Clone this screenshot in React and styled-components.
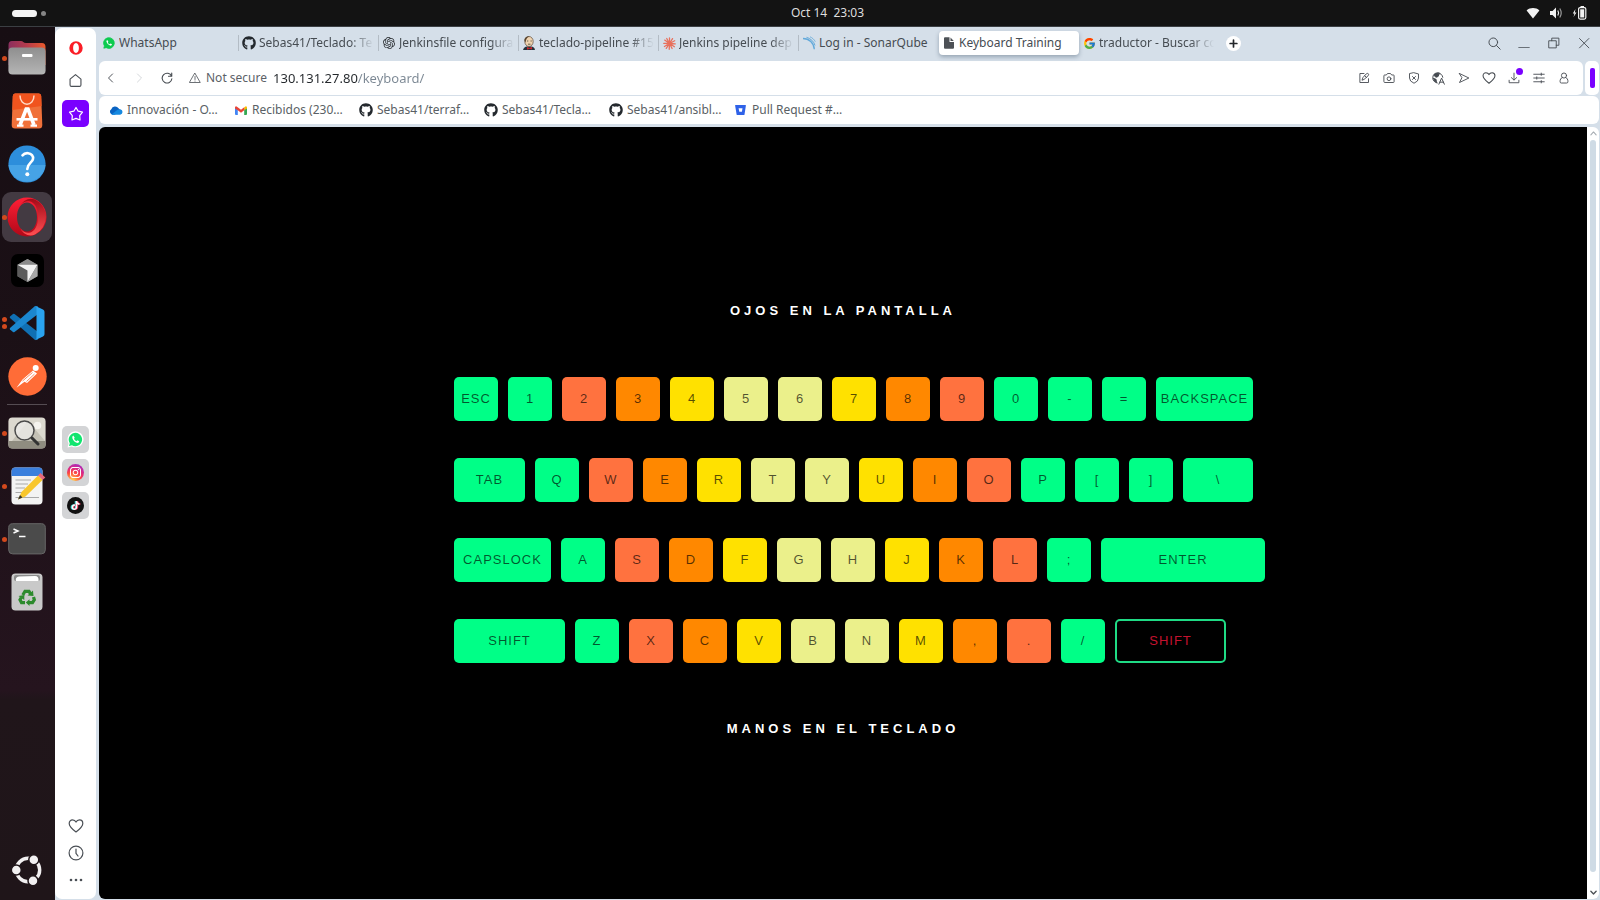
import React from "react";
import styled, { createGlobalStyle, css } from "styled-components";
import { SiOpenai, SiInstagram, SiTiktok } from "react-icons/si";
import { FaGithub } from "react-icons/fa";
import { FcGoogle } from "react-icons/fc";

const UI_FONT = '"Noto Sans", "Open Sans", sans-serif';
const CHROME = "#d5dfe9";
const PURPLE = "#7a00ff";

const GlobalStyle = createGlobalStyle`
  *, *::before, *::after { box-sizing: border-box; }
  body { margin: 0; background: #131313; font-family: ${UI_FONT}; }
  button { border: 0; margin: 0; padding: 0; background: none; font: inherit; color: inherit; cursor: pointer; }
  a { color: inherit; text-decoration: none; }
  h1, h2, ul { margin: 0; padding: 0; list-style: none; }
  svg { display: block; flex: none; }
`;

/* ---------- desktop shell ---------- */

const Desktop = styled.div`
  display: grid;
  grid-template: 27px 1fr / 55px 1fr;
  min-height: 100vh;
`;

const TopBar = styled.header`
  grid-column: 1 / -1;
  display: grid;
  grid-template-columns: 55px 1fr auto 1fr;
  align-items: center;
  background: #131313;
  border-bottom: 1px solid #3b3f43;
  color: #dedede;
  font-size: 12px;
  line-height: 16px;
`;

const Workspaces = styled.button`
  display: flex;
  align-items: center;
  gap: 4px;
  padding-left: 12px;
  height: 26px;
`;

const WorkspaceDot = styled.span`
  width: ${(p) => (p.$active ? 25 : 5)}px;
  height: ${(p) => (p.$active ? 7 : 5)}px;
  border-radius: 4px;
  background: ${(p) => (p.$active ? "#f4f4f4" : "#858585")};
`;

const Clock = styled.time`
  grid-column: 3;
  white-space: pre;
`;

const SystemTray = styled.div`
  display: flex;
  justify-content: flex-end;
  align-items: center;
  gap: 9px;
  padding-right: 13px;
`;

const Dock = styled.nav`
  display: flex;
  flex-direction: column;
  align-items: center;
  gap: 3px;
  padding: 6px 1px 5px 0;
  background: linear-gradient(#170e13 0%, #1b1016 35%, #25141e 76%, #20151a 77%, #1f1519 100%);
`;

const DockItem = styled.button`
  position: relative;
  display: grid;
  place-items: center;
  width: 50px;
  height: 50px;
  border-radius: 9px;
  background: ${(p) => (p.$active ? "#433a42" : "transparent")};
`;

const RunningDots = styled.span`
  position: absolute;
  left: 0;
  top: 0;
  bottom: 0;
  display: flex;
  flex-direction: column;
  justify-content: center;
  gap: 2px;
`;

const RunningDot = styled.i`
  width: 5px;
  height: 5px;
  border-radius: 50%;
  background: #d2491d;
`;

const DockRule = styled.hr`
  width: 40px;
  height: 1px;
  margin: 0;
  border: 0;
  background: #554c52;
`;

const DockSpacer = styled.div`
  flex: 1;
`;

/* ---------- browser ---------- */

const Browser = styled.div`
  display: grid;
  grid-template-columns: 41px 1fr;
  gap: 3px;
  min-width: 0;
  background: ${CHROME};
`;

const Sidebar = styled.aside`
  display: grid;
  grid-template-rows: 1fr auto 1fr;
  justify-items: center;
  margin: 1px 0 1px 0;
  padding: 6px 0;
  border-radius: 7px;
  background: #fff;
  color: #4a4f55;
`;

const SideGroup = styled.div`
  display: flex;
  flex-direction: column;
  gap: ${(p) => (p.$tight ? 0 : 6)}px;
  align-self: ${(p) => p.$align || "start"};
  margin-top: ${(p) => (p.$align === "center" ? 18 : 0)}px;
`;

const SideButton = styled.button`
  display: grid;
  place-items: center;
  width: 27px;
  height: 27px;
  border-radius: 5px;
  ${(p) => p.$tone === "active" && css`background: ${PURPLE}; color: #fff;`}
  ${(p) => p.$tone === "muted" && css`background: #d3d4d6;`}
`;

const Window = styled.div`
  display: flex;
  flex-direction: column;
  min-width: 0;
`;

const TabStrip = styled.div`
  display: flex;
  align-items: center;
  height: 34px;
  padding: 0 1px 2px 0;
  font-size: 12px;
  line-height: 16px;
  color: #464c52;
`;

const Tab = styled.button`
  position: relative;
  display: flex;
  align-items: center;
  gap: 3px;
  flex: 0 1 140px;
  min-width: 0;
  height: 24px;
  padding: 0 5px 0 3px;
  border-radius: 4px;
  text-align: left;
  ${(p) => p.$active && css`
    background: #fff;
    box-shadow: 0 2px 4px rgba(70, 90, 110, 0.45);
  `}
`;

const TabDivider = styled.i`
  position: absolute;
  left: -1px;
  top: 4px;
  bottom: 4px;
  width: 1px;
  background: #b3bcc5;
`;

const TabIcon = styled.span`
  display: grid;
  place-items: center;
  flex: none;
  width: 14px;
  height: 14px;
  color: ${(p) => p.$color || "inherit"};
`;

const TabTitle = styled.span`
  flex: 1;
  overflow: hidden;
  white-space: nowrap;
  mask-image: ${(p) => (p.$fade ? "linear-gradient(to right, #000 calc(100% - 24px), transparent)" : "none")};
`;

const NewTab = styled.button`
  display: grid;
  place-items: center;
  width: 15px;
  height: 15px;
  margin-left: 7px;
  border-radius: 50%;
  background: #fff;
  color: #22262a;
`;

const WindowControls = styled.div`
  display: flex;
  margin-left: auto;
`;

const WindowButton = styled.button`
  display: grid;
  place-items: center;
  width: 30px;
  height: 30px;
`;

const AddressRow = styled.div`
  display: flex;
  gap: 2px;
  height: 34px;
  padding-right: 1px;
`;

const AddressBar = styled.div`
  display: flex;
  align-items: center;
  flex: 1;
  min-width: 0;
  padding-right: 7px;
  border-radius: 6px;
  background: #fff;
  color: #454a50;
`;

const NavButton = styled.button`
  display: grid;
  place-items: center;
  width: 28px;
  height: 28px;
  color: ${(p) => (p.disabled ? "#c5c9cd" : "inherit")};
`;

const NavGroup = styled.div`
  display: flex;
  margin: 0 8px 0 -2px;
`;

const Security = styled.button`
  display: flex;
  align-items: center;
  gap: 5px;
  margin-right: 6px;
  font-size: 12px;
  line-height: 16px;
  color: #5c6167;
  white-space: nowrap;
`;

const UrlInput = styled.input`
  flex: 1;
  min-width: 0;
  padding: 0;
  border: 0;
  outline: 0;
  font: 13px/20px ${UI_FONT};
  color: #24282c;
  background: linear-gradient(to right, #24282c 85px, #7b8793 85px);
  background-clip: text;
  -webkit-text-fill-color: transparent;
`;

const ToolButton = styled.button`
  position: relative;
  display: grid;
  place-items: center;
  width: 25px;
  height: 28px;
`;

const Badge = styled.i`
  position: absolute;
  right: 3px;
  top: 4px;
  width: 7px;
  height: 7px;
  border-radius: 50%;
  background: ${PURPLE};
`;

const PanelHandle = styled.button`
  display: grid;
  place-items: center;
  width: 14px;
  border-radius: 5px;
  background: #fff;
`;

const HandleMark = styled.i`
  width: 5px;
  height: 20px;
  border-radius: 2px;
  background: ${PURPLE};
`;

const Bookmarks = styled.nav`
  display: flex;
  align-items: center;
  height: 28px;
  margin: 1px 1px 3px 0;
  padding-left: 9px;
  border-radius: 6px;
  background: #fff;
  color: #5a5f65;
  font-size: 12px;
  line-height: 16px;
`;

const Bookmark = styled.a`
  display: flex;
  align-items: center;
  gap: 4px;
  width: 125px;
  white-space: nowrap;
`;

const BookmarkIcon = styled.span`
  display: grid;
  place-items: center;
  width: 15px;
  height: 15px;
  color: #24292e;
`;

/* ---------- page ---------- */

const Viewport = styled.div`
  display: flex;
  flex: 1;
  margin: 0 1px 1px 0;
  border-radius: 6px;
  overflow: hidden;
`;

const Page = styled.main`
  display: flex;
  flex: 1;
  flex-direction: column;
  align-items: center;
  justify-content: center;
  gap: 56px;
  padding-top: 14px;
  background: #000;
  font-family: "Liberation Sans", Arial, sans-serif;
`;

const Banner = styled.h1`
  font-size: 13px;
  line-height: 20px;
  font-weight: 700;
  letter-spacing: 4px;
  text-transform: uppercase;
  color: #fff;
`;

const Keyboard = styled.ul`
  display: flex;
  flex-direction: column;
  justify-content: space-between;
  width: 778px;
  min-height: 286px;
`;

const KeyRow = styled.li`
  display: flex;
  gap: 10px;
`;

const FINGER = {
  pinky: "#00ff87",
  ring: "#ff723f",
  middle: "#ff8800",
  index: "#ffe100",
  thumb: "#ebf08b",
};

const Key = styled.button`
  flex: none;
  width: ${(p) => p.$width || 44}px;
  height: 44px;
  border-radius: 5px;
  background: ${(p) => FINGER[p.$finger]};
  color: rgba(0, 0, 0, 0.66);
  font-size: 13px;
  line-height: 16px;
  letter-spacing: 1px;
  text-align: center;
  ${(p) => p.$hit && css`
    background: #000;
    border: 2px solid #1fdb85;
    color: #c4122f;
  `}
`;

const Scrollbar = styled.div`
  display: flex;
  flex-direction: column;
  align-items: center;
  width: 12px;
  padding-top: 3px;
  background: #fff;
  color: #a7adb3;
`;

const ScrollThumb = styled.div`
  flex: 1;
  width: 6px;
  margin: 3px 0 17px;
  border-radius: 3px;
  background: #cfdbe5;
`;

const ScrollEnd = styled.div`
  height: 10px;
  color: #4c5156;
`;

/* ---------- icons ---------- */

const Line = ({ size = 12, box = 16, width = 1.2, children }) => (
  <svg width={size} height={size} viewBox={`0 0 ${box} ${box}`} fill="none" stroke="currentColor" strokeWidth={width} strokeLinecap="round" strokeLinejoin="round" aria-hidden="true">
    {children}
  </svg>
);

const HEART = "M8 14C4.500 11.300 1.200 8.600 1.200 5.400C1.200 3.300 2.700 1.900 4.500 1.900C6 1.900 7.300 2.700 8 4.100C8.700 2.700 10 1.900 11.500 1.900C13.300 1.900 14.800 3.300 14.800 5.400C14.800 8.600 11.500 11.300 8 14Z";
const BUBBLE = "M2 15L2.800 12.200A6.700 6.700 0 1 1 5 14.300Z";
const HANDSET = "M6.300 4.600Q5 5.400 5.300 7Q6.500 11 10.300 11.900Q12.200 11.700 12.200 10.200L10.400 9.200L9.500 10.200Q7.700 9.500 7 7.800L7.700 6.800Z";

const FilesIcon = () => (
  <svg width="38" height="34" viewBox="0 0 38 34">
    <defs>
      <linearGradient id="fBack" x1="0" x2="1"><stop offset="0" stopColor="#8b2f5e" /><stop offset=".5" stopColor="#b63c4c" /><stop offset="1" stopColor="#ea5a2c" /></linearGradient>
      <linearGradient id="fFront" x1="0" y1="0" x2="0" y2="1"><stop offset="0" stopColor="#8f8f8f" /><stop offset="1" stopColor="#b5b5b5" /></linearGradient>
    </defs>
    <path d="M4 0H13C15 0 15.500 2 18 2H34Q37.500 2 37.500 6V24H.5V4Q.5 0 4 0Z" fill="url(#fBack)" />
    <rect x=".4" y="6.600" width="37.200" height="27" rx="4" fill="url(#fFront)" />
    <rect x="14" y="13" width="10.500" height="3" rx="1" fill="#fff" />
  </svg>
);

const SoftwareIcon = () => (
  <svg width="32" height="36" viewBox="0 0 32 36">
    <path d="M4 .5H28Q30 .5 30.200 3L31.300 32Q31.300 35.500 28 35.500H4Q.7 35.500 .7 32L1.800 3Q2 .5 4 .5Z" fill="#f0713a" />
    <path d="M4 .5H28Q30 .5 30.200 3L30.600 13L1.400 17L1.800 3Q2 .5 4 .5Z" fill="#f0541e" />
    <path d="M9 2.500C9 14 23 14 23 2.500" fill="none" stroke="#ffd9c6" strokeWidth="1.500" />
    <path d="M9 32L15.200 16H17L23 32" fill="none" stroke="#fff" strokeWidth="3.600" />
    <path d="M5.500 26.300H26.500" stroke="#fff" strokeWidth="2.600" />
    <path d="M6 32.600H12.500M19.500 32.600H26" stroke="#fff" strokeWidth="2.400" />
  </svg>
);

const HelpIcon = () => (
  <svg width="38" height="38" viewBox="0 0 38 38">
    <circle cx="19" cy="19" r="18.600" fill="#2d8edb" />
    <path d="M.5 20H37.500A18.600 18.600 0 0 1 .5 20Z" fill="#46a3e6" />
    <path d="M14.500 10.300C16 8.500 18 8 20 8.200C23.500 8.500 25.500 11 25 14C24.500 17.500 19.300 18.600 19.300 24" fill="none" stroke="#fff" strokeWidth="2.600" strokeLinecap="round" />
    <circle cx="19.300" cy="29.300" r="2" fill="#fff" />
  </svg>
);

const OperaIcon = () => (
  <svg width="40" height="40" viewBox="0 0 40 40">
    <defs>
      <linearGradient id="oA" x1="0" y1="0" x2="0" y2="1"><stop offset="0" stopColor="#ff1f36" /><stop offset="1" stopColor="#b00818" /></linearGradient>
      <linearGradient id="oB" x1="0" y1="0" x2="0" y2="1"><stop offset="0" stopColor="#a30a18" /><stop offset="1" stopColor="#ff4f52" /></linearGradient>
    </defs>
    <path fillRule="evenodd" d="M20 .5A19.500 19.500 0 1 0 20 39.500A19.500 19.500 0 1 0 20 .5ZM20 5.500C26 5.500 30 12 30 20C30 28 26 34.500 20 34.500C14 34.500 10 28 10 20C10 12 14 5.500 20 5.500Z" fill="url(#oA)" />
    <path d="M13.500 8.500C16 5 19 4 22 4.300C28 5 31 12 31 20C31 28 28 35 22 35.700C19 36 16 35 13.500 31.500C16 37 22 40 28 37.500A19.500 19.500 0 0 0 28 2.500C22 0 16 3.500 13.500 8.500Z" fill="url(#oB)" />
  </svg>
);

const CursorIcon = () => (
  <svg width="33" height="33" viewBox="0 0 33 33">
    <rect width="33" height="33" rx="7" fill="#000" />
    <path d="M16.500 5L26.500 10.700V22.300L16.500 28L6.500 22.300V10.700Z" fill="#737373" />
    <path d="M16.500 5L26.500 10.700H6.500Z" fill="#8a8a8a" />
    <path d="M6.500 10.700L16.500 16.500V28L6.500 22.300Z" fill="#5c5c5c" />
    <path d="M6.500 10.700H26.500L16.500 28V16.500Z" fill="#f2f2f2" />
    <path d="M26.500 10.700V22.300L16.500 28Z" fill="#a8a8a8" />
  </svg>
);

const VsCodeIcon = () => (
  <svg width="36" height="36" viewBox="0 0 36 36">
    <path d="M1 11.500L4 9Q4.800 8.600 5.500 9L29 27V34.500L26 35L1 13Q.5 12.200 1 11.500Z" fill="#1070b3" />
    <path d="M1 24.500L4 27Q4.800 27.400 5.500 27L29 9V1.500L26 1L1 23Q.5 23.800 1 24.500Z" fill="#1b87cf" />
    <path d="M26 .8L34 4.500Q35.500 5.300 35.500 6.700V29.300Q35.500 30.700 34 31.500L26 35.200Q27.500 34.500 27.500 33V3Q27.500 1.500 26 .8Z" fill="#2aa3ef" />
  </svg>
);

const PostmanIcon = () => (
  <svg width="39" height="39" viewBox="0 0 39 39">
    <circle cx="19.500" cy="19.500" r="19.200" fill="#ff6c37" />
    <circle cx="27.700" cy="11" r="3" fill="#fff" />
    <path d="M25 13.500L29 16.500L19 26L16.500 24.800L8.500 30.800L14.500 22.500Z" fill="#fff" />
    <path d="M24.500 15.500L14.500 24M26.500 17L18.500 24.500" stroke="#ff6c37" strokeWidth=".8" />
  </svg>
);

const ViewerIcon = () => (
  <svg width="38" height="32" viewBox="0 0 38 32">
    <rect x=".4" y=".4" width="37.200" height="31" rx="4" fill="#dcd9cf" />
    <path d="M.4 24H37.600V28Q37.600 31.500 33 31.500H5Q.4 31.500 .4 28Z" fill="#8f8c80" />
    <path d="M4 24L20 4L37 24Z" fill="#c4c1b5" />
    <circle cx="29.500" cy="8.500" r="3.800" fill="#f5f3ee" />
    <circle cx="16.500" cy="13.500" r="9.500" fill="#ecebe9" fillOpacity=".8" stroke="#4b4b4b" strokeWidth="1.500" />
    <path d="M24 21L30 27" stroke="#333" strokeWidth="3" strokeLinecap="round" />
  </svg>
);

const EditorIcon = () => (
  <svg width="38" height="38" viewBox="0 0 38 38">
    <rect x="3.500" y=".5" width="31" height="37" rx="4" fill="#f3f3f3" />
    <path d="M3.500 9V4.500Q3.500 .5 7.500 .5H30.500Q34.500 .5 34.500 4.500V9Z" fill="#3a7fdd" />
    <path d="M7.500 13H23M7.500 17H20M7.500 21H17M7.500 25.500H14M7.500 30.500H31" stroke="#a9a9a9" strokeWidth="1.200" />
    <path d="M10 32.500L13.500 25L30 8.500L34.500 13L17.500 29.500Z" fill="#f8c62c" />
    <path d="M10 32.500L12 28L14.500 30.500Z" fill="#333" />
    <path d="M30 8.500L32.500 6L37.300 10.500L34.500 13Z" fill="#e8697b" />
  </svg>
);

const TerminalIcon = () => (
  <svg width="38" height="32" viewBox="0 0 38 32">
    <rect x=".7" y=".7" width="36.600" height="30.200" rx="4" fill="#4b4b4b" stroke="#666" />
    <path d="M5.500 6L10 8L5.500 10" fill="none" stroke="#fff" strokeWidth="1.500" />
    <path d="M11 13.500H17.500" stroke="#fff" strokeWidth="1.500" />
  </svg>
);

const TrashIcon = () => (
  <svg width="32" height="38" viewBox="0 0 32 38">
    <rect x=".5" y=".5" width="31" height="37" rx="4" fill="#c9c9c9" />
    <rect x="3" y="2" width="26" height="6" rx="2" fill="#8c8c8c" />
    <path d="M5 8Q4 4 8 3.500L24 3Q28 3 27.500 8Z" fill="#fff" />
    <g fill="none" stroke="#2c8a2c" strokeWidth="3.200">
      <path d="M11.800 22L14 18.300H18L19.500 21" />
      <path d="M22.500 24L23.300 26.800L21.500 29.600H18" />
      <path d="M14 29.600H10.500L9 26.800L10.300 24.500" />
    </g>
    <path d="M16.500 22.500L22.500 23L22 17.500ZM18.500 26.300V33L14.800 29.600ZM7.500 23L13.300 22L13.300 27Z" fill="#2c8a2c" />
  </svg>
);

const UbuntuIcon = () => (
  <svg width="32" height="32" viewBox="0 0 32 32">
    <circle cx="17" cy="16" r="11.700" fill="none" stroke="#f2f0f1" strokeWidth="3.400" />
    <g fill="#f2f0f1" stroke="#1f1519" strokeWidth="1.500">
      <circle cx="5.300" cy="16" r="5" />
      <circle cx="22.800" cy="5.800" r="5" />
      <circle cx="22" cy="26.700" r="5" />
    </g>
  </svg>
);

const WifiIcon = () => (
  <svg width="14" height="12" viewBox="0 0 14 12"><path d="M7 11.500L.6 3.500C4 .3 10 .3 13.400 3.500Z" fill="#f2f2f2" /></svg>
);

const VolumeIcon = () => (
  <svg width="14" height="14" viewBox="0 0 14 14">
    <path d="M1 5H3.500L7 1.500V12.500L3.500 9H1Z" fill="#f2f2f2" />
    <path d="M8.800 4.500Q10.400 7 8.800 9.500" fill="none" stroke="#f2f2f2" strokeWidth="1.200" />
    <path d="M10.800 2.500Q13.600 7 10.800 11.500" fill="none" stroke="#9a9a9a" strokeWidth="1.200" />
  </svg>
);

const BatteryIcon = () => (
  <svg width="15" height="14" viewBox="0 0 15 14">
    <path d="M3.500 3L.8 7.500H2.500L1.500 11L4.500 6.500H2.800Z" fill="#f2f2f2" />
    <rect x="6.600" y="1.600" width="7.200" height="11.500" rx="1.500" fill="none" stroke="#f2f2f2" strokeWidth="1.200" />
    <rect x="8.200" y="3.300" width="4" height="8.200" fill="#f2f2f2" />
    <path d="M8.500 .6H12" stroke="#f2f2f2" strokeWidth="1.200" />
  </svg>
);

const OperaMark = () => (
  <svg width="14" height="14" viewBox="0 0 14 14">
    <path fillRule="evenodd" d="M7 .3A6.700 6.700 0 0 0 7 13.700A6.700 6.700 0 0 0 7 .3ZM7 2C8.800 2 9.900 4.200 9.900 7S8.800 12 7 12S4.100 9.800 4.100 7S5.200 2 7 2Z" fill="#fa1e27" />
  </svg>
);

const WhatsappIcon = () => (
  <svg width="12" height="12" viewBox="1 1 15 15">
    <path d={BUBBLE} fill="#0ccb4f" stroke="#0ccb4f" />
    <path d={HANDSET} fill="#fff" />
  </svg>
);

const JenkinsIcon = () => (
  <svg width="14" height="14" viewBox="0 0 14 14">
    <path d="M1 14Q2 10.500 5 10.500H9Q12.500 10.500 13 14Z" fill="#26323b" />
    <ellipse cx="7" cy="5.500" rx="4.200" ry="5" fill="#efd3b0" stroke="#5b4a3a" strokeWidth=".7" />
    <path d="M2.500 5C2 1.500 5 .2 7.500 .3C5 1.500 4 3 3.500 6.500Z" fill="#59452f" />
    <path d="M5 5H6.300M8.500 5H9.800M6 8.200H8.500" stroke="#443" strokeWidth=".8" />
    <path d="M5 11L7.500 12L10 10.800V13.500L7.500 12.700L5 13.700Z" fill="#c7262c" />
  </svg>
);

const ClaudeIcon = () => (
  <svg width="13" height="13" viewBox="0 0 14 14" stroke="#e8705c" strokeWidth="1.400" strokeLinecap="round">
    <path d="M7 7V.9M7 7L10.300 1.800M7 7L12.600 4M7 7L13.200 7.400M7 7L12.300 10.500M7 7L9.800 12.400M7 7L6.700 13.200M7 7L3.500 12.300M7 7L1.500 10.200M7 7L.8 6.800M7 7L1.800 3.300M7 7L4 1.600" />
  </svg>
);

const SonarIcon = () => (
  <svg width="14" height="14" viewBox="0 0 14 14" fill="none" stroke="#62a9da">
    <path d="M1 2.500C7 2.500 12 7 12.300 13.300" strokeWidth="1.300" />
    <path d="M4.500 1.300C8.500 2.300 12 5.500 13 9.500" strokeWidth="1" />
    <path d="M8 .8C10.300 1.800 12.300 3.500 13.300 5.700" strokeWidth=".8" />
  </svg>
);

const PageIcon = () => (
  <svg width="12" height="12" viewBox="0 0 12 12">
    <path d="M2 .3H6.500V5H11V10.700Q11 11.700 10 11.700H2Q1 11.700 1 10.700V1.300Q1 .3 2 .3ZM7.500 .5L10.800 4H7.500Z" fill="#4d5156" />
  </svg>
);

const OneDriveIcon = () => (
  <svg width="14" height="9" viewBox="0 0 14 9">
    <path d="M3.500 8.700A3 3 0 0 1 2.300 3.200A4 4 0 0 1 9.500 2.300L11 3.800L6 8.700Z" fill="#0a63c2" />
    <path d="M2.500 8.500L8.500 3.800A3.500 3.500 0 0 1 11.300 3.300A2.800 2.800 0 0 1 11.200 8.800H3.500Q2.900 8.800 2.500 8.500Z" fill="#1689e0" />
  </svg>
);

const GmailIcon = () => (
  <svg width="12" height="9" viewBox="0 0 12 9">
    <path d="M0 1.500V8Q0 9 1 9H2.800V3Z" fill="#4285f4" />
    <path d="M12 1.500V8Q12 9 11 9H9.200V3Z" fill="#34a853" />
    <path d="M9.200 4.300V1.600L10 .7Q11.500 -.3 12 1.500V2.500Z" fill="#fbbc04" />
    <path d="M0 2.500V1.500Q.5 -.3 2 .7L6 3.700L9.200 1.300V4.300L6 6.700L2.800 4.300Z" fill="#ea4335" />
  </svg>
);

const BitbucketIcon = () => (
  <svg width="11" height="10" viewBox="0 0 11 10">
    <path fillRule="evenodd" d="M.5 0H10.500Q11 0 10.900 .6L9.500 9.400Q9.400 10 8.900 10H2.200Q1.700 10 1.600 9.400L.1 .6Q0 0 .5 0ZM3.600 3.200L4.300 6.700H6.900L7.500 3.200Z" fill="#2f62e8" />
  </svg>
);

const HomeMark = () => <Line size={15}><path d="M2.200 6.500L8 1.700L13.800 6.500V12.800Q13.800 14.300 12.300 14.300H3.700Q2.200 14.300 2.200 12.800Z" /></Line>;
const StarMark = () => <Line size={16}><path d="M8 1.500L10.200 5.200L14.500 6.200L11.700 9.600L12 14L8 12.400L4 14L4.300 9.600L1.500 6.200L5.800 5.200Z" /></Line>;
const HeartMark = ({ size }) => <Line size={size}><path d={HEART} /></Line>;
const ClockMark = () => <Line size={16}><circle cx="8" cy="8" r="6.900" /><path d="M8 4V8.300L10 11" /></Line>;
const DotsMark = () => (
  <svg width="14" height="4" viewBox="0 0 14 4" fill="#4a4f55"><circle cx="2" cy="2" r="1.300" /><circle cx="7" cy="2" r="1.300" /><circle cx="12" cy="2" r="1.300" /></svg>
);
const WhatsappTile = () => (
  <svg width="17" height="17" viewBox="0 0 17 17">
    <path d="M.6 16.400L1.600 12.400A8 8 0 1 1 4.700 15.400Z" fill="#fff" />
    <path d={BUBBLE} fill="#12e56f" />
    <path d={HANDSET} fill="#fff" />
  </svg>
);

const InstagramTile = styled.span`
  display: grid;
  place-items: center;
  width: 17px;
  height: 17px;
  border-radius: 50%;
  color: #fff;
  background: radial-gradient(circle at 30% 100%, #ffc14d 10%, #ff4d3d 40%, #e02a7d 60%, #8a2be2 100%);
`;

const TiktokTile = styled.span`
  display: grid;
  place-items: center;
  width: 17px;
  height: 17px;
  border-radius: 50%;
  color: #fff;
  background: #111;
  svg { filter: drop-shadow(1px 0 0 #e8305a) drop-shadow(-1px 0 0 #35c9c9); }
`;

/* ---------- data ---------- */

const dockTop = [
  { name: "Files", icon: <FilesIcon />, dots: 1 },
  { name: "App Center", icon: <SoftwareIcon /> },
  { name: "Help", icon: <HelpIcon /> },
  { name: "Opera", icon: <OperaIcon />, dots: 1, active: true },
  { name: "Cursor", icon: <CursorIcon /> },
  { name: "Visual Studio Code", icon: <VsCodeIcon />, dots: 2 },
  { name: "Postman", icon: <PostmanIcon /> },
];

const dockBottom = [
  { name: "Image Viewer", icon: <ViewerIcon />, dots: 1 },
  { name: "Text Editor", icon: <EditorIcon />, dots: 1 },
  { name: "Terminal", icon: <TerminalIcon />, dots: 1 },
  { name: "Trash", icon: <TrashIcon /> },
];

const tabs = [
  { title: "WhatsApp", icon: <WhatsappIcon /> },
  { title: "Sebas41/Teclado: Te", icon: <FaGithub size={14} />, color: "#24292e", divider: true, fade: true },
  { title: "Jenkinsfile configura", icon: <SiOpenai size={12} />, color: "#2a2e32", divider: true, fade: true },
  { title: "teclado-pipeline #15", icon: <JenkinsIcon />, divider: true, fade: true },
  { title: "Jenkins pipeline dep", icon: <ClaudeIcon />, divider: true, fade: true },
  { title: "Log in - SonarQube", icon: <SonarIcon />, divider: true },
  { title: "Keyboard Training", icon: <PageIcon />, active: true },
  { title: "traductor - Buscar co", icon: <FcGoogle size={13} />, fade: true },
];

const bookmarks = [
  { label: "Innovación - O…", icon: <OneDriveIcon /> },
  { label: "Recibidos (230…", icon: <GmailIcon /> },
  { label: "Sebas41/terraf…", icon: <FaGithub size={14} /> },
  { label: "Sebas41/Tecla…", icon: <FaGithub size={14} /> },
  { label: "Sebas41/ansibl…", icon: <FaGithub size={14} /> },
  { label: "Pull Request #…", icon: <BitbucketIcon /> },
];

const tools = [
  { name: "Edit page", icon: <><path d="M8 2H2.500V14H14V9" /><path d="M5.500 10.500L6.500 7.500L11 2.500Q12.500 1.200 13.700 2.300Q14.800 3.500 13.500 5L8.500 9.500ZM9 5L11.300 7.300" /></> },
  { name: "Snapshot", icon: <><path d="M1.200 4.800Q1.200 4 2 4H4.500L6 2H10L11.500 4H14Q14.800 4 14.800 4.800V13Q14.800 14 13.800 14H2.200Q1.200 14 1.200 13Z" /><circle cx="8" cy="9" r="2.500" /></> },
  { name: "Ad blocker", icon: <><path d="M8 1L14 2.600V8Q14 12.500 8 15Q2 12.500 2 8V2.600Z" /><path d="M6 6L10 10M10 6L6 10" /></> },
  { name: "Translate", icon: <><path d="M6.500 13.500A6.200 6.200 0 1 1 13.300 6.500" /><path d="M7 1.200Q3.500 1.500 2.200 4L5 6.500L7.500 5.500L9 2ZM2 8L5 9L5.500 13Q2.500 11.500 2 8Z" fill="currentColor" /><path d="M8.500 15L11.800 7.500L15.200 15M9.800 12.500H14" /></>, size: 13 },
  { name: "Send", icon: <path d="M2 2L14.500 8L2 14L5 8Z" /> },
  { name: "Favourite", icon: <path d={HEART} />, size: 14 },
  { name: "Downloads", icon: <path d="M8 1.500V10.500M4.500 7.500L8 10.800L11.500 7.500M1.500 11V14.300H14.500V11" />, badge: true },
  { name: "Easy setup", icon: <path d="M1 3H15M1 8H15M1 13H15M11 1.500V4.500M5 6.500V9.500M11 11.500V14.500" /> },
  { name: "Profile", icon: <><circle cx="8" cy="4.700" r="3.400" /><path d="M5.500 7.500Q2.800 8.500 2.800 11.500V13Q2.800 14.700 4.500 14.700H11.500Q13.200 14.700 13.200 13V11.500Q13.200 8.500 10.500 7.500" /></> },
];

const FINGERS = { p: "pinky", r: "ring", m: "middle", i: "index", t: "thumb" };

const rows = [
  { keys: ["ESC", "1", "2", "3", "4", "5", "6", "7", "8", "9", "0", "-", "=", "BACKSPACE"], fingers: "pprmittimrpppp", first: 44, last: 97 },
  { keys: ["TAB", "Q", "W", "E", "R", "T", "Y", "U", "I", "O", "P", "[", "]", "\\"], fingers: "pprmittimrpppp", first: 71, last: 70 },
  { keys: ["CAPSLOCK", "A", "S", "D", "F", "G", "H", "J", "K", "L", ";", "ENTER"], fingers: "pprmittimrpp", first: 97, last: 164 },
  { keys: ["SHIFT", "Z", "X", "C", "V", "B", "N", "M", ",", ".", "/", "SHIFT"], fingers: "pprmittimrpp", first: 111, last: 111, hit: 11 },
];

const DockEntry = ({ name, icon, dots = 0, active }) => (
  <DockItem $active={active} aria-label={name}>
    {icon}
    <RunningDots>{Array.from({ length: dots }, (_, i) => <RunningDot key={i} />)}</RunningDots>
  </DockItem>
);

export default function App() {
  return (
    <>
      <GlobalStyle />
      <Desktop>
        <TopBar>
          <Workspaces aria-label="Activities"><WorkspaceDot $active /><WorkspaceDot /></Workspaces>
          <Clock>{"Oct 14  23:03"}</Clock>
          <SystemTray><WifiIcon /><VolumeIcon /><BatteryIcon /></SystemTray>
        </TopBar>

        <Dock aria-label="Dock">
          {dockTop.map((d) => <DockEntry key={d.name} {...d} />)}
          <DockRule />
          {dockBottom.map((d) => <DockEntry key={d.name} {...d} />)}
          <DockSpacer />
          <DockEntry name="Show Apps" icon={<UbuntuIcon />} />
        </Dock>

        <Browser>
          <Sidebar>
            <SideGroup>
              <SideButton aria-label="Opera menu"><OperaMark /></SideButton>
              <SideButton aria-label="Home"><HomeMark /></SideButton>
              <SideButton $tone="active" aria-label="Workspace"><StarMark /></SideButton>
            </SideGroup>
            <SideGroup $align="center">
              <SideButton $tone="muted" aria-label="WhatsApp"><WhatsappTile /></SideButton>
              <SideButton $tone="muted" aria-label="Instagram"><InstagramTile><SiInstagram size={11} /></InstagramTile></SideButton>
              <SideButton $tone="muted" aria-label="TikTok"><TiktokTile><SiTiktok size={9} /></TiktokTile></SideButton>
            </SideGroup>
            <SideGroup $align="end" $tight>
              <SideButton aria-label="Favourites"><HeartMark size={16} /></SideButton>
              <SideButton aria-label="History"><ClockMark /></SideButton>
              <SideButton aria-label="More"><DotsMark /></SideButton>
            </SideGroup>
          </Sidebar>

          <Window>
            <TabStrip>
              {tabs.map((t) => (
                <Tab key={t.title} $active={t.active}>
                  {t.divider && <TabDivider />}
                  <TabIcon $color={t.color}>{t.icon}</TabIcon>
                  <TabTitle $fade={t.fade}>{t.title}</TabTitle>
                </Tab>
              ))}
              <NewTab aria-label="New tab"><Line size={9} width={3}><path d="M8 2V14M2 8H14" /></Line></NewTab>
              <WindowControls>
                <WindowButton aria-label="Search tabs"><Line size={13}><circle cx="6.500" cy="6.500" r="5.300" /><path d="M10.500 10.500L15 15" /></Line></WindowButton>
                <WindowButton aria-label="Minimize"><Line size={12} width={1}><path d="M1 14H15" /></Line></WindowButton>
                <WindowButton aria-label="Restore"><Line size={12}><path d="M1.500 5H11V14.500H1.500ZM5 5V1.500H14.500V11H11" /></Line></WindowButton>
                <WindowButton aria-label="Close"><Line size={12}><path d="M2 2L14.500 14.500M14.500 2L2 14.500" /></Line></WindowButton>
              </WindowControls>
            </TabStrip>

            <AddressRow>
              <AddressBar>
                <NavGroup>
                  <NavButton aria-label="Back"><Line size={10} width={1.5}><path d="M10.500 1.500L4 8L10.500 14.500" /></Line></NavButton>
                  <NavButton aria-label="Forward" disabled><Line size={10}><path d="M5.500 1.500L12 8L5.500 14.500" /></Line></NavButton>
                  <NavButton aria-label="Reload"><Line size={12} width={1.5}><path d="M14 5.500A6.500 6.500 0 1 0 14.500 9M14.300 1.500V5.700H10" /></Line></NavButton>
                </NavGroup>
                <Security>
                  <Line size={12}><path d="M8 1.800L15 14H1ZM8 6V10M8 12V12.200" /></Line>
                  Not secure
                </Security>
                <UrlInput aria-label="Address" defaultValue="130.131.27.80/keyboard/" />
                {tools.map((t) => (
                  <ToolButton key={t.name} aria-label={t.name}>
                    <Line size={t.size || 12}>{t.icon}</Line>
                    {t.badge && <Badge />}
                  </ToolButton>
                ))}
              </AddressBar>
              <PanelHandle aria-label="Open side panel"><HandleMark /></PanelHandle>
            </AddressRow>

            <Bookmarks aria-label="Bookmarks">
              {bookmarks.map((b) => (
                <Bookmark key={b.label} href="#">
                  <BookmarkIcon>{b.icon}</BookmarkIcon>
                  {b.label}
                </Bookmark>
              ))}
            </Bookmarks>

            <Viewport>
              <Page>
                <Banner>Ojos en la pantalla</Banner>
                <Keyboard>
                  {rows.map((row, r) => (
                    <KeyRow key={r}>
                      {row.keys.map((k, i) => (
                        <Key
                          key={i}
                          $finger={FINGERS[row.fingers[i]]}
                          $width={i === 0 ? row.first : i === row.keys.length - 1 ? row.last : 44}
                          $hit={row.hit === i}
                        >
                          {k}
                        </Key>
                      ))}
                    </KeyRow>
                  ))}
                </Keyboard>
                <Banner as="h2">Manos en el teclado</Banner>
              </Page>
              <Scrollbar>
                <Line size={7} width={2.500}><path d="M2 11L8 4.500L14 11" /></Line>
                <ScrollThumb />
                <ScrollEnd><Line size={7} width={3}><path d="M2 5L8 11.500L14 5" /></Line></ScrollEnd>
              </Scrollbar>
            </Viewport>
          </Window>
        </Browser>
      </Desktop>
    </>
  );
}
